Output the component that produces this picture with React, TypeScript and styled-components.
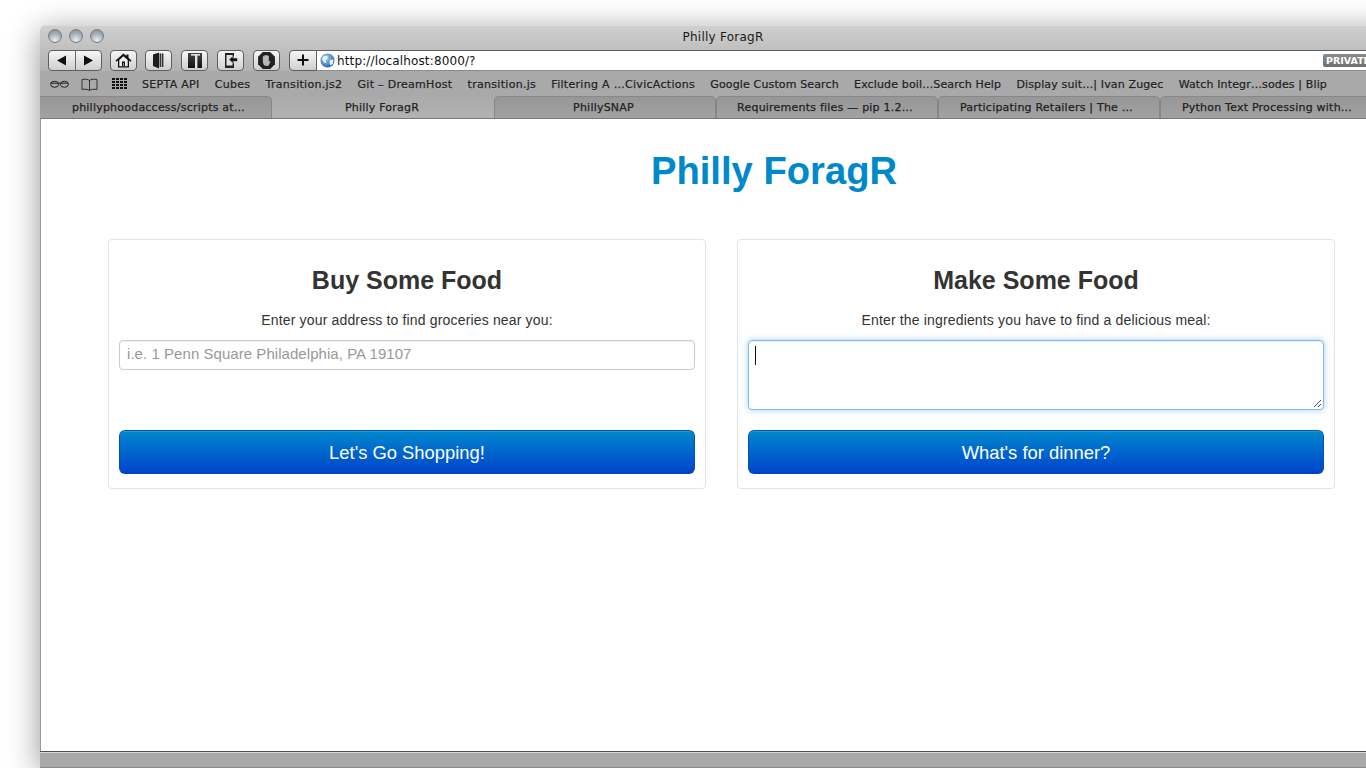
import React from "react";
import styled, { createGlobalStyle } from "styled-components";

const GlobalStyle = createGlobalStyle`
  html, body {
    margin: 0;
    padding: 0;
    height: 768px;
    overflow: hidden;
    background: #fff;
  }
  * { box-sizing: border-box; }
`;

const Desktop = styled.div`
  width: 1366px;
  height: 768px;
  overflow: hidden;
  padding: 25px 0 0 40px;
  background: #fff;
`;

const Window = styled.div`
  width: 1366px;
  height: 743px;
  display: flex;
  flex-direction: column;
  border-radius: 5px 5px 0 0;
  box-shadow: 0 6px 32px rgba(0, 0, 0, 0.42);
  font-family: "DejaVu Sans", sans-serif;
`;

const Chrome = styled.div`
  height: 46px;
  flex: none;
  border-radius: 5px 5px 0 0;
  border-top: 1px solid #dcdcdc;
  background: linear-gradient(#cfcfcf, #b2b2b2);
  display: flex;
  flex-direction: column;
`;

const TitleRow = styled.div`
  height: 23px;
  position: relative;
  display: flex;
  align-items: center;
  justify-content: center;
  padding-bottom: 2px;
  font-size: 12px;
  letter-spacing: 0.25px;
  color: #1a1a1a;
`;

const Lights = styled.div`
  position: absolute;
  left: 8px;
  top: 3px;
  display: flex;
  gap: 7px;
`;

const Light = styled.span`
  width: 14px;
  height: 14px;
  border-radius: 50%;
  border: 1px solid #7d7d7d;
  background: radial-gradient(circle at 50% 85%, #e8eef2 0%, #a9b1b8 55%, #7f878e 100%);
`;

const ToolRow = styled.div`
  height: 22px;
  display: flex;
  align-items: center;
  padding-left: 8px;
`;

const BtnGroup = styled.div<{ $w: number; $gap: number }>`
  width: ${(p) => p.$w}px;
  height: 21px;
  margin-right: ${(p) => p.$gap}px;
  display: flex;
  flex: none;
  border: 1px solid #5f5f5f;
  border-radius: 4px;
  background: linear-gradient(#f6f6f6, #cfcfcf);
  overflow: hidden;
`;

const BtnCell = styled.div`
  flex: 1;
  display: flex;
  align-items: center;
  justify-content: center;
  & + & { border-left: 1px solid #6a6a6a; }
`;

const PlusBtn = styled(BtnGroup)`
  border-radius: 4px 0 0 4px;
  border-right: 1px solid #5f5f5f;
  margin-right: 0;
`;

const AddressBar = styled.div`
  flex: 1;
  height: 21px;
  background: #fff;
  border-top: 1px solid #5f5f5f;
  border-bottom: 1px solid #8c8c8c;
  display: flex;
  align-items: center;
  padding-left: 3px;
  font-size: 12px;
  letter-spacing: 0.13px;
  color: #111;
  gap: 2px;
`;

const Url = styled.span`
  width: 984px;
  flex: none;
  padding-top: 1px;
`;

const PrivateBadge = styled.span`
  flex: none;
  height: 13px;
  width: 70px;
  border-radius: 2px;
  padding-left: 3px;
  background: linear-gradient(#8b8b8b, #6f6f6f);
  color: #fff;
  font-size: 9.5px;
  letter-spacing: 0;
  font-weight: 700;
  line-height: 13px;
`;

const BookmarkRow = styled.div`
  height: 25px;
  flex: none;
  background: #a9a9a9;
  display: flex;
  align-items: center;
  padding: 1px 0 0 10px;
  white-space: nowrap;
`;

const BookmarkIcon = styled.span<{ $gap: number }>`
  display: flex;
  flex: none;
  margin-right: ${(p) => p.$gap}px;
`;

const Bookmark = styled.span<{ $tight?: boolean }>`
  margin-right: 15.2px;
  flex: none;
  font-size: 11px;
  letter-spacing: ${(p) => (p.$tight ? "0.14px" : "0.3px")};
  color: #222;
  text-shadow: 0 1px 0 rgba(255, 255, 255, 0.25);
  -webkit-text-stroke: 0.25px #222;
`;

const TabRow = styled.div`
  height: 23px;
  display: flex;
  flex: none;
  background: #a9a9a9;
  border-bottom: 1px solid #777;
`;

const Tab = styled.div<{ $active?: boolean; $first?: boolean; $w: number; $shift: number }>`
  width: ${(p) => p.$w}px;
  flex: none;
  display: flex;
  align-items: center;
  justify-content: center;
  padding-left: ${(p) => (p.$shift < 0 ? -p.$shift : 0)}px;
  padding-right: ${(p) => (p.$shift > 0 ? p.$shift : 0)}px;
  font-size: 11px;
  letter-spacing: 0.22px;
  color: #222;
  -webkit-text-stroke: 0.25px #222;
  ${(p) =>
    p.$active
      ? `
    background: linear-gradient(#aaaaaa, #b2b2b2);
  `
      : `
    background: linear-gradient(#979797, #a2a2a2);
    border-top: 1px solid #888;
    border-right: 1px solid #868686;
    border-left: ${p.$first ? "none" : "1px solid #868686"};
    border-radius: ${p.$first ? "0 5px 0 0" : "5px 5px 0 0"};
  `}
`;

const Content = styled.main`
  flex: none;
  height: 632px;
  background: #fff;
  border-left: 1px solid #999;
  font-family: "Liberation Sans", Arial, sans-serif;
  color: #333;
`;

const Heading = styled.h1`
  margin: 0;
  padding: 27px 0 0 101px;
  height: 120px;
  text-align: center;
  font-size: 38.2px;
  line-height: 50px;
  font-weight: 700;
  color: #0088cc;
`;

const Cards = styled.div`
  display: flex;
  gap: 31px;
  padding-left: 67px;
`;

const Card = styled.section`
  width: 598px;
  height: 250px;
  padding: 22px 10px 0;
  border: 1px solid #e3e3e3;
  border-radius: 4px;
  display: flex;
  flex-direction: column;
  align-items: stretch;
`;

const CardTitle = styled.h2`
  margin: 0;
  height: 40px;
  line-height: 36px;
  text-align: center;
  font-size: 25px;
  font-weight: 700;
  color: #333;
`;

const CardText = styled.p`
  margin: 0;
  height: 38px;
  line-height: 36px;
  text-align: center;
  font-size: 14px;
  letter-spacing: 0.16px;
  color: #333;
`;

const FieldSlot = styled.div`
  height: 90px;
`;

const AddressInput = styled.input`
  display: block;
  width: 100%;
  height: 30px;
  padding: 0 7px 4px;
  font: 15px "Liberation Sans", Arial, sans-serif;
  letter-spacing: 0.05px;
  border: 1px solid #ccc;
  border-radius: 4px;
  box-shadow: inset 0 1px 1px rgba(0, 0, 0, 0.07);
  &::placeholder { color: #999; opacity: 1; }
`;

const IngredientsBox = styled.div`
  position: relative;
  height: 70px;
  border: 1px solid #7dbbf0;
  border-radius: 4px;
  box-shadow: inset 0 1px 1px rgba(0, 0, 0, 0.07), 0 0 6px rgba(82, 168, 236, 0.55);
  background: #fff;
`;

const Caret = styled.span`
  position: absolute;
  left: 6px;
  top: 5px;
  width: 1px;
  height: 19px;
  background: #111;
`;

const Grip = styled.svg`
  position: absolute;
  right: 1px;
  bottom: 1px;
`;

const GoButton = styled.button`
  display: block;
  width: 100%;
  height: 44px;
  padding: 2px 0 0;
  border: 1px solid #0055b0;
  border-bottom-color: #0044bb;
  border-radius: 6px;
  background: linear-gradient(#0088cc, #0044cc);
  color: #fff;
  font: 18.4px "Liberation Sans", Arial, sans-serif;
  box-shadow: inset 0 1px 0 rgba(255, 255, 255, 0.15);
`;

const StatusBar = styled.div`
  flex: 1;
  background: #a9a9a9;
  border-top: 1px solid #4e4e4e;
  border-bottom: 1px solid #8a8a8a;
  box-shadow: inset 0 1px 0 #d8d8d8;
`;

const Globe = () => (
  <svg width="15" height="15" viewBox="0 0 15 15">
    <defs>
      <radialGradient id="gb" cx="40%" cy="35%" r="70%">
        <stop offset="0" stopColor="#a6d2f5" />
        <stop offset="1" stopColor="#1f5fae" />
      </radialGradient>
    </defs>
    <circle cx="7.5" cy="7.5" r="7" fill="url(#gb)" />
    <path d="M3 3.5 7 2.5 8 5 5.5 7 6.5 10 4.5 10 2 6.5Z" fill="#e8f1f8" />
    <path d="M10 7 13.5 6.5 13 10.5 10.5 12.5 9.5 10Z" fill="#e8f1f8" />
  </svg>
);

const bookmarks = [
  { title: "SEPTA API" },
  { title: "Cubes" },
  { title: "Transition.js2" },
  { title: "Git – DreamHost" },
  { title: "transition.js" },
  { title: "Filtering A …CivicActions" },
  { title: "Google Custom Search", tight: true },
  { title: "Exclude boil…Search Help", tight: true },
  { title: "Display suit…| Ivan Zugec", tight: true },
  { title: "Watch Integr…sodes | Blip", tight: true },
];

const tabs = [
  { title: "phillyphoodaccess/scripts at…", w: 232, first: true, shift: -6 },
  { title: "Philly ForagR", w: 222, active: true, shift: 2 },
  { title: "PhillySNAP", w: 222, shift: 3 },
  { title: "Requirements files — pip 1.2…", w: 222, shift: 4 },
  { title: "Participating Retailers | The …", w: 222, shift: 5 },
  { title: "Python Text Processing with…", w: 222, shift: 8 },
];

export default function App() {
  return (
    <Desktop>
      <GlobalStyle />
      <Window>
        <Chrome>
          <TitleRow>
            <Lights>
              <Light />
              <Light />
              <Light />
            </Lights>
            Philly ForagR
          </TitleRow>
          <ToolRow>
            <BtnGroup $w={54} $gap={8}>
              <BtnCell>
                <svg width="11" height="11" viewBox="0 0 11 11"><path d="M10 0.5V10.5L1 5.5Z" fill="#111" /></svg>
              </BtnCell>
              <BtnCell>
                <svg width="11" height="11" viewBox="0 0 11 11"><path d="M1 0.5V10.5L10 5.5Z" fill="#111" /></svg>
              </BtnCell>
            </BtnGroup>
            <BtnGroup $w={27} $gap={8}>
              <BtnCell>
                <svg width="17" height="15" viewBox="0 0 17 15">
                  <path d="M8.5 0.5 0.5 7.5 1.5 8.7 3 7.5V14.5H14V7.5L15.5 8.7 16.5 7.5 13.5 4.8V1.5H11.5V3.1Z" fill="#111" />
                  <path d="M4.3 7 8.5 3.2 12.7 7V13.3H4.3Z" fill="#efefef" />
                  <path d="M7 8.5H10V13.3H8.8V10H8.2V13.3H7Z" fill="#111" />
                </svg>
              </BtnCell>
            </BtnGroup>
            <BtnGroup $w={27} $gap={9}>
              <BtnCell>
                <svg width="13" height="17" viewBox="0 0 13 17">
                  <path d="M1 2.5 7 0.5V16.5L1 14Z" fill="#1d1d1d" />
                  <path d="M7 1.5H12V15H7Z" fill="#9a9a9a" />
                  <path d="M8.5 1.5V15M10.5 1.5V15" stroke="#222" strokeWidth="0.8" />
                </svg>
              </BtnCell>
            </BtnGroup>
            <BtnGroup $w={27} $gap={9}>
              <BtnCell>
                <svg width="16" height="17" viewBox="0 0 16 17">
                  <defs>
                    <linearGradient id="tb" x1="0" y1="0" x2="0" y2="1">
                      <stop offset="0" stopColor="#444" />
                      <stop offset="1" stopColor="#111" />
                    </linearGradient>
                  </defs>
                  <rect x="1" y="1" width="14" height="15" fill="url(#tb)" />
                  <rect x="8" y="2.5" width="2.4" height="13.5" fill="#e4e4e4" />
                  <rect x="4" y="2" width="9" height="1.6" fill="#e4e4e4" />
                </svg>
              </BtnCell>
            </BtnGroup>
            <BtnGroup $w={27} $gap={9}>
              <BtnCell>
                <svg width="16" height="17" viewBox="0 0 16 17">
                  <path d="M2 1H11V16H2Z" fill="#222" />
                  <path d="M3.5 3H9.5V13.5H3.5Z" fill="#e2e2e2" />
                  <path d="M6 7.5 10 3.8V6H14.5V9.5H10V11.5Z" fill="#111" stroke="#e2e2e2" strokeWidth="0.6" />
                </svg>
              </BtnCell>
            </BtnGroup>
            <BtnGroup $w={27} $gap={9}>
              <BtnCell>
                <svg width="19" height="19" viewBox="0 0 18 18">
                  <path d="M5.5 1H12.5L17 5.5V12.5L12.5 17H5.5L1 12.5V5.5Z" fill="#222" />
                  <path d="M5.5 8V5.5C5.5 4.6 6.6 4.6 6.8 5.4V4.4C7 3.5 8.1 3.5 8.3 4.4 8.5 3.5 9.7 3.6 9.8 4.5 10.2 3.9 11.2 4.2 11.2 5V10C12 9.5 12.6 9.6 12.8 10L11 13.8C10.5 14.4 7.5 14.4 6.8 13.6 5.8 12.4 5.5 10.5 5.5 8Z" fill="#b8b8b8" />
                </svg>
              </BtnCell>
            </BtnGroup>
            <PlusBtn $w={28} $gap={0}>
              <BtnCell>
                <svg width="12" height="12" viewBox="0 0 12 12"><path d="M5 0.5H7V5H11.5V7H7V11.5H5V7H0.5V5H5Z" fill="#111" /></svg>
              </BtnCell>
            </PlusBtn>
            <AddressBar>
              <Globe />
              <Url>http://localhost:8000/?</Url>
              <PrivateBadge>PRIVATE</PrivateBadge>
            </AddressBar>
          </ToolRow>
        </Chrome>
        <BookmarkRow>
          <BookmarkIcon $gap={12}>
            <svg width="19" height="8" viewBox="0 0 19 8" fill="none" stroke="#222" strokeWidth="1">
              <ellipse cx="4.6" cy="4.3" rx="4" ry="3" />
              <ellipse cx="14.4" cy="4.3" rx="4" ry="3" />
              <path d="M0.6 3.2H18.4" />
            </svg>
          </BookmarkIcon>
          <BookmarkIcon $gap={14}>
            <svg width="17" height="13" viewBox="0 0 17 13" fill="none" stroke="#333" strokeWidth="1">
              <path d="M8.5 2.5C7 1 3.5 1 1 1.5V11.5C3.5 11 7 11 8.5 12.5 10 11 13.5 11 16 11.5V1.5C13.5 1 10 1 8.5 2.5ZM8.5 2.5V12.5" />
            </svg>
          </BookmarkIcon>
          <BookmarkIcon $gap={15}>
            <svg width="15" height="12" viewBox="0 0 15 12" fill="#111">
              <path d="M0 0h3v2H0zM4 0h3v2H4zM8 0h3v2H8zM12 0h3v2h-3zM0 3h3v2H0zM4 3h3v2H4zM8 3h3v2H8zM12 3h3v2h-3zM0 6h3v2H0zM4 6h3v2H4zM8 6h3v2H8zM12 6h3v2h-3zM0 9h3v2H0zM4 9h3v2H4zM8 9h3v2H8zM12 9h3v2h-3z" />
            </svg>
          </BookmarkIcon>
          {bookmarks.map((b) => (
            <Bookmark key={b.title} $tight={b.tight}>{b.title}</Bookmark>
          ))}
        </BookmarkRow>
        <TabRow>
          {tabs.map((t) => (
            <Tab key={t.title} $active={t.active} $first={t.first} $w={t.w} $shift={t.shift}>
              {t.title}
            </Tab>
          ))}
        </TabRow>
        <Content>
          <Heading>Philly ForagR</Heading>
          <Cards>
            <Card>
              <CardTitle>Buy Some Food</CardTitle>
              <CardText>Enter your address to find groceries near you:</CardText>
              <FieldSlot>
                <AddressInput placeholder="i.e. 1 Penn Square Philadelphia, PA 19107" />
              </FieldSlot>
              <GoButton>Let's Go Shopping!</GoButton>
            </Card>
            <Card>
              <CardTitle>Make Some Food</CardTitle>
              <CardText>Enter the ingredients you have to find a delicious meal:</CardText>
              <FieldSlot>
                <IngredientsBox>
                  <Caret />
                  <Grip width="9" height="9" viewBox="0 0 9 9" stroke="#555" strokeWidth="1">
                    <path d="M1 8 8 1M5 8 8 5" />
                  </Grip>
                </IngredientsBox>
              </FieldSlot>
              <GoButton>What's for dinner?</GoButton>
            </Card>
          </Cards>
        </Content>
        <StatusBar />
      </Window>
    </Desktop>
  );
}
